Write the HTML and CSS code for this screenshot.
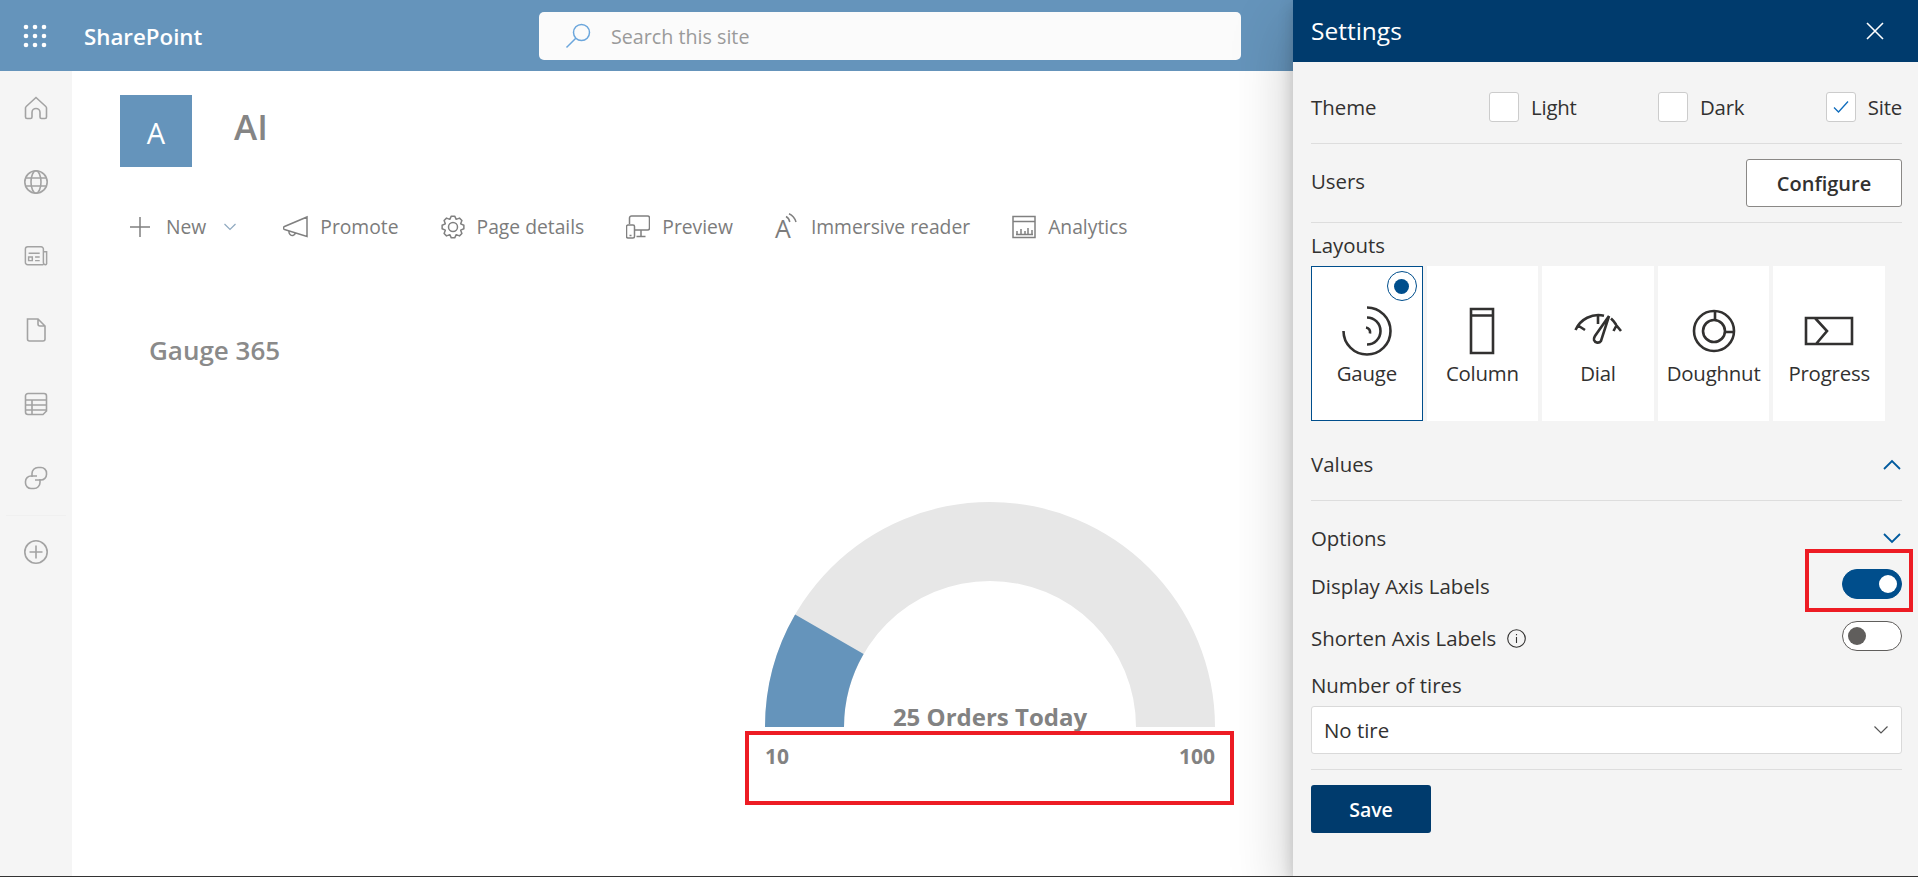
FILE: index.html
```html
<!doctype html>
<html lang="en">
<head>
	<meta charset="UTF-8">
	<title>SharePoint - AI</title>
	<link rel="stylesheet" href="styles.css">
</head>
<body>
<div class="page">
	<header class="topbar">
		<svg class="waffle" width="24" height="24" viewBox="0 0 24 24" fill="#fff">
			<circle cx="3" cy="3" r="2.3"/><circle cx="12" cy="3" r="2.3"/><circle cx="21" cy="3" r="2.3"/>
			<circle cx="3" cy="12" r="2.3"/><circle cx="12" cy="12" r="2.3"/><circle cx="21" cy="12" r="2.3"/>
			<circle cx="3" cy="21" r="2.3"/><circle cx="12" cy="21" r="2.3"/><circle cx="21" cy="21" r="2.3"/>
		</svg>
		<div class="brand">SharePoint</div>
		<div class="search">
			<svg width="26" height="26" viewBox="0 0 26 26" fill="none" stroke="#6ba6dc" stroke-width="1.5">
				<circle cx="16.5" cy="9.5" r="8"/><path d="M10.8 15.2 1.5 24.5"/>
			</svg>
			<span>Search this site</span>
		</div>
	</header>

	<div class="body-row">
		<nav class="rail">
			<a class="rail-item"><svg viewBox="0 0 24 24"><path d="M12 1.500 2.200 10.500a2 2 0 0 0-.7 1.500v9a1.500 1.500 0 0 0 1.500 1.500h3.500a1.500 1.500 0 0 0 1.500-1.500v-4.500a4 4 0 0 1 8 0V21a1.500 1.500 0 0 0 1.500 1.500H21a1.500 1.500 0 0 0 1.500-1.500v-9a2 2 0 0 0-.7-1.500z"/></svg></a>
			<a class="rail-item"><svg viewBox="0 0 24 24"><circle cx="12" cy="12" r="11.200"/><ellipse cx="12" cy="12" rx="5" ry="11.200"/><path d="M1.800 8h20.400M1.800 16h20.400"/></svg></a>
			<a class="rail-item"><svg viewBox="0 0 26 24"><path d="M21 21.500H4A2.500 2.500 0 0 1 1.500 19V4.500A2.500 2.500 0 0 1 4 2h14.500a2.500 2.500 0 0 1 2.500 2.500V19a2.500 2.500 0 0 0 2.500 2.500 1.500 1.500 0 0 0 1-1.500V7.500h-4"/><path d="M5 9h12M5 13h4v4H5zM12 13h5M12 17h5"/></svg></a>
			<a class="rail-item"><svg viewBox="0 0 24 24"><path d="M3.500 1h10.500l7 7v13a2 2 0 0 1-2 2H5.500a2 2 0 0 1-2-2zM14 1v5a2 2 0 0 0 2 2h5"/></svg></a>
			<a class="rail-item"><svg viewBox="0 0 24 24"><path d="M4 1.500h16a2.500 2.500 0 0 1 2.500 2.500v15l-3.500 3.500H4A2.500 2.500 0 0 1 1.500 20V4A2.500 2.500 0 0 1 4 1.500zM1.500 8h21M1.500 13h21M1.500 18h21M8 8v14.500"/></svg></a>
			<a class="rail-item"><svg viewBox="0 0 24 24"><path d="M8 11V7.500a6 6 0 0 1 6-6h3A5.500 5.500 0 0 1 22.500 7v1.500A5.500 5.500 0 0 1 17 14h-6"/><path d="M16 13v3.500a6 6 0 0 1-6 6H7A5.500 5.500 0 0 1 1.500 17v-1.500A5.500 5.500 0 0 1 7 10h6"/></svg></a>
			<a class="rail-item rail-add"><svg viewBox="0 0 24 24"><circle cx="12" cy="12" r="11.200"/><path d="M12 5.500v13M5.500 12h13"/></svg></a>
		</nav>

		<main class="content">
			<div class="site-head">
				<div class="site-logo">A</div>
				<h1 class="site-title">AI</h1>
			</div>

			<div class="commands">
				<div class="cmd cmd-new">
					<svg width="20" height="20" viewBox="0 0 20 20"><path d="M10 0v20M0 10h20"/></svg>
					<span class="new-label">New</span>
					<svg class="cmd-caret" width="12" height="8" viewBox="0 0 12 8"><path d="m.5 1 5.500 5.500L11.500 1"/></svg>
				</div>
				<div class="cmd">
					<svg width="25" height="24" viewBox="0 0 25 24"><path d="M24 2v19.500L1.500 14.500a1.500 1.500 0 0 1-.7-2.500c.3-.3.5-.4.7-.5zM6 16c-.5 3 2 4.800 4 4.500 1.300-.2 2-1 2.300-2.500"/></svg>
					<span>Promote</span>
				</div>
				<div class="cmd">
					<svg width="24" height="24" viewBox="0 0 24 24"><path stroke-linejoin="round" d="M22.870 13.720 19.670 15.180 20.900 18.470 18.470 20.900 15.180 19.670 13.720 22.870H10.280L8.820 19.670 5.530 20.900 3.100 18.470 4.330 15.180 1.130 13.720V10.280L4.330 8.820 3.100 5.530 5.530 3.100 8.820 4.330 10.280 1.130H13.720L15.180 4.330 18.470 3.100 20.900 5.530 19.670 8.820 22.870 10.280Z"/><circle cx="12" cy="12" r="4.500"/></svg>
					<span>Page details</span>
				</div>
				<div class="cmd">
					<svg width="24" height="24" viewBox="0 0 24 24"><path d="M3.500 9V3a2 2 0 0 1 2-2h16a2 2 0 0 1 2 2v10a2 2 0 0 1-2 2H9M15 15v6.500M10.500 21.500h9M2 10h5a1.500 1.500 0 0 1 1.500 1.500v10A1.500 1.500 0 0 1 7 23H2a1.500 1.500 0 0 1-1.500-1.500v-10A1.500 1.500 0 0 1 2 10zM3.500 20.500h2"/></svg>
					<span>Preview</span>
				</div>
				<div class="cmd">
					<span class="reader"><span class="reader-a">A</span><svg width="12" height="12" viewBox="0 0 12 12"><path d="M1 3.500c2 1 3.300 3 3.800 5.500M4 .7c3.500 1.500 6 4.800 7 8.300"/></svg></span>
					<span>Immersive reader</span>
				</div>
				<div class="cmd">
					<svg width="24" height="24" viewBox="0 0 24 24"><path d="M1 1.500h22v21H1zM1 6.500h22M5 19v-3M9 19v-5M13 19v-3M16 19v-6M20 19v-4M4 19.500h17"/></svg>
					<span>Analytics</span>
				</div>
			</div>

			<h2 class="part-title">Gauge 365</h2>

			<div class="chart">
				<svg class="gauge" width="450" height="225" viewBox="0 0 450 225">
					<path fill="#e7e7e7" d="M0 225a225 225 0 0 1 450 0H371a146 146 0 0 0-292 0z"/>
					<path fill="#6594bb" d="M0 225A225 225 0 0 1 30.100 112.500L98.600 152A146 146 0 0 0 79 225z"/>
				</svg>
				<div class="gauge-caption">25 Orders Today</div>
				<div class="axis"><span>10</span><span>100</span></div>
				<div class="mark mark-axis"></div>
			</div>
		</main>
	</div>

	<aside class="panel">
		<div class="panel-head">
			<span>Settings</span>
			<svg width="18" height="18" viewBox="0 0 18 18"><path d="m1 1 16 16M17 1 1 17"/></svg>
		</div>
		<div class="panel-body">
			<div class="row row-theme">
				<div class="row-label">Theme</div>
				<div class="theme-options">
					<label class="check"><i class="box"></i>Light</label>
					<label class="check"><i class="box"></i>Dark</label>
					<label class="check"><i class="box"><svg width="16" height="14" viewBox="0 0 16 14"><path d="m1 7.500 4.500 4.500L15 1.500"/></svg></i>Site</label>
				</div>
			</div>
			<div class="row row-users">
				<div class="users-label">Users</div>
				<button class="btn-configure">Configure</button>
			</div>
			<div class="layouts-label">Layouts</div>
			<div class="tiles">
				<div class="tile tile-on">
					<span class="radio"></span>
					<svg width="50" height="50" viewBox="0 0 50 50"><path d="M25 1.500a23.500 23.500 0 1 1-23.500 23.500M25 11.500a13.500 13.500 0 0 1 0 27M24 21.500c3 .5 4.500 3 4 6"/></svg>
					<div>Gauge</div>
				</div>
				<div class="tile">
					<svg width="50" height="50" viewBox="0 0 50 50"><path d="M14 3h22v44H14zM14 9.500h22"/></svg>
					<div>Column</div>
				</div>
				<div class="tile">
					<svg width="50" height="50" viewBox="0 0 50 50"><path d="M2.500 24A25 25 0 0 1 31 9.700M38 12.500A25 25 0 0 1 43 18.500M25 9v9M5 19.500l7 4.500M40.500 25l3-5.500 4.500 5.500M36 10 28 35a4 4 0 0 1-7-1c-.5-1.500 0-2 1-4z"/></svg>
					<div>Dial</div>
				</div>
				<div class="tile">
					<svg width="50" height="50" viewBox="0 0 50 50"><circle cx="25" cy="25" r="20"/><circle cx="25" cy="25" r="11"/><path d="M26 5v9M36 26h9"/></svg>
					<div>Doughnut</div>
				</div>
				<div class="tile">
					<svg width="50" height="50" viewBox="0 0 50 50"><path d="M2 12h46v26H2zM11 12l12 13-11 13"/></svg>
					<div>Progress</div>
				</div>
			</div>
			<div class="row-values">
				<span>Values</span>
				<svg class="chev" width="18" height="11" viewBox="0 0 18 11"><path d="m1 10 8-8 8 8"/></svg>
			</div>
			<div class="row-options">
				<span>Options</span>
				<svg class="chev" width="18" height="11" viewBox="0 0 18 11"><path d="m1 1 8 8 8-8"/></svg>
			</div>
			<div class="row-toggle row-display">
				<span class="toggle-label">Display Axis Labels</span>
				<span class="toggle toggle-on"></span>
				<div class="mark mark-toggle"></div>
			</div>
			<div class="row-toggle row-shorten">
				<span class="toggle-label shorten-label">Shorten Axis Labels
					<svg width="19" height="19" viewBox="0 0 19 19"><circle cx="9.500" cy="9.500" r="8.800"/><path d="M9.500 8v6M9.500 5v1.300"/></svg>
				</span>
				<span class="toggle"></span>
			</div>
			<div class="tires-label">Number of tires</div>
			<div class="select">
				<span>No tire</span>
				<svg width="14" height="8" viewBox="0 0 14 8"><path d="m.5.500 6.500 6.500L13.500.5"/></svg>
			</div>
			<div class="panel-foot">
				<button class="btn-save">Save</button>
			</div>
		</div>
	</aside>
</div>
</body>
</html>
```

FILE: styles.css
```css
* {
	margin: 0;
	padding: 0;
	box-sizing: border-box;
}
html, body {
	height: 877px;
	overflow: hidden;
}
body {
	font-family: "Open Sans", "Noto Sans", sans-serif;
	background: #fff;
	color: #333;
}
.page {
	position: relative;
	height: 877px;
	border-bottom: 1px solid #333;
	overflow: hidden;
}

/* top bar */
.topbar {
	height: 71px;
	background: #6594bb;
	display: flex;
	align-items: center;
	padding-left: 23px;
}
.waffle {
	flex: none;
}
.brand {
	margin-left: 37px;
	width: 118px;
	color: #fff;
	font-size: 22.3px;
	font-weight: 600;
	white-space: nowrap;
	padding-top: 1px;
}
.search {
	margin-left: 337px;
	width: 702px;
	height: 48px;
	background: #fbfbfb;
	border-radius: 5px;
	display: flex;
	align-items: center;
	padding-left: 26px;
	color: #9a9a9a;
	font-size: 19.7px;
}
.search span {
	margin-left: 20px;
	padding-top: 2px;
}

/* left rail */
.body-row {
	display: flex;
	height: 805px;
}
.rail {
	width: 72px;
	flex: none;
	background: #f5f5f5;
}
.rail-item {
	height: 74px;
	display: flex;
	align-items: center;
	justify-content: center;
}
.rail-item svg {
	width: 24px;
	height: 24px;
	fill: none;
	stroke: #a3a3a3;
	stroke-width: 1.6;
}
.rail-add {
	position: relative;
}
.rail-add:before {
	content: "";
	position: absolute;
	top: 0;
	left: 6px;
	right: 6px;
	border-top: 1px solid #f0f0f0;
}

/* page content */
.content {
	flex: 1;
	min-width: 0;
	padding-top: 24px;
}
.site-head {
	display: flex;
	padding-left: 48px;
}
.site-logo {
	width: 72px;
	height: 72px;
	background: #6594bb;
	color: #fff;
	font-size: 29px;
	display: flex;
	align-items: center;
	justify-content: center;
	padding-top: 3px;
}
.site-title {
	margin-left: 42px;
	margin-top: 8px;
	font-size: 35px;
	line-height: 48px;
	font-weight: 600;
	color: #858585;
}
.commands {
	display: flex;
	align-items: center;
	height: 40px;
	margin-top: 40px;
	margin-left: 58px;
	gap: 42px;
	color: #7c7c7c;
	font-size: 19.3px;
}
.cmd {
	display: flex;
	align-items: center;
	gap: 12px;
	white-space: nowrap;
}
.cmd > span {
	margin-top: -2px;
}
.cmd svg {
	fill: none;
	stroke: #808080;
	stroke-width: 1.5;
	flex: none;
}
.cmd-new {
	gap: 0;
	margin-right: 5px;
}
.new-label {
	margin-left: 16px;
}
.cmd svg.cmd-caret {
	stroke: #8fa9c0;
	stroke-width: 1.2;
	margin-left: 18px;
}
.reader {
	display: flex;
	width: 24px;
	height: 26px;
	align-items: flex-start;
}
.reader-a {
	font-size: 25px;
	line-height: 30px;
}
.cmd .reader svg {
	margin-left: -6px;
}
.part-title {
	margin: 87px 0 0 77px;
	font-size: 26px;
	line-height: 32px;
	font-weight: 600;
	color: #8a8a8a;
}

/* gauge */
.chart {
	position: relative;
	width: 450px;
	margin: 136px 0 0 693px;
}
.gauge {
	display: block;
}
.gauge-caption {
	position: absolute;
	top: 200px;
	left: 0;
	right: 0;
	text-align: center;
	font-size: 24px;
	line-height: 30px;
	font-weight: 700;
	color: #828282;
}
.axis {
	display: flex;
	justify-content: space-between;
	margin-top: 17px;
	font-size: 21px;
	line-height: 24px;
	font-weight: 700;
	color: #828282;
}

/* red marks */
.mark {
	position: absolute;
	border: 4.5px solid #ed1c24;
}
.mark-axis {
	left: -20px;
	top: 229px;
	width: 489px;
	height: 74px;
}
.mark-toggle {
	right: -11px;
	top: -20px;
	width: 108px;
	height: 63px;
}

/* settings panel */
.panel {
	position: absolute;
	top: 0;
	right: 0;
	bottom: 0;
	width: 625px;
	background: #f4f4f4;
	box-shadow: 0 25px 58px rgba(0, 0, 0, .22), 0 5px 14px rgba(0, 0, 0, .18);
	font-size: 20.4px;
	color: #323130;
}
.panel-head {
	height: 62px;
	background: #003b6d;
	color: #fff;
	display: flex;
	align-items: center;
	justify-content: space-between;
	padding: 0 34px 2px 18px;
	font-size: 24.5px;
}
.panel-head svg {
	fill: none;
	stroke: #fff;
	stroke-width: 1.6;
	margin-top: 2px;
}
.panel-body {
	padding: 0 16px 0 18px;
}
.row {
	display: flex;
	border-bottom: 1px solid #ddd;
}
.row-theme {
	height: 82px;
	padding-top: 30px;
}
.row-label {
	width: 178px;
	line-height: 30px;
	font-weight: 500;
}
.theme-options {
	flex: 1;
	display: flex;
	justify-content: space-between;
	letter-spacing: -.2px;
}
.check {
	display: flex;
	align-items: center;
	height: 30px;
	gap: 12px;
}
.box {
	width: 30px;
	height: 30px;
	background: #fff;
	border: 1px solid #ccc;
	border-radius: 3px;
	display: flex;
	align-items: center;
	justify-content: center;
}
.box svg {
	fill: none;
	stroke: #0f6cbd;
	stroke-width: 1.3;
}
.row-users {
	height: 79px;
	align-items: center;
	justify-content: space-between;
}
.users-label {
	font-weight: 500;
	margin-bottom: 4px;
}
.btn-configure {
	width: 156px;
	height: 48px;
	background: #fff;
	border: 1px solid #8a8886;
	border-radius: 3px;
	font: 600 20px "Open Sans", "Noto Sans", sans-serif;
	color: #323130;
}
.layouts-label {
	margin-top: 10px;
	line-height: 24px;
	font-weight: 500;
}
.tiles {
	display: grid;
	grid-template-columns: repeat(5, 1fr);
	gap: 4px;
	width: 574px;
	margin-top: 9px;
}
.tile {
	position: relative;
	height: 155px;
	background: #fff;
	padding-top: 40px;
	display: flex;
	flex-direction: column;
	align-items: center;
	white-space: nowrap;
	line-height: 24px;
	letter-spacing: -.2px;
}
.tile svg {
	fill: none;
	stroke: #323130;
	stroke-width: 2.6;
	margin-bottom: 5px;
	flex: none;
}
.tile-on {
	border: 1px solid #004e8c;
	padding-top: 39px;
}
.radio {
	position: absolute;
	top: 4px;
	right: 5px;
	width: 30px;
	height: 30px;
	border: 1px solid #004e8c;
	border-radius: 50%;
	background: #fff;
	display: flex;
	align-items: center;
	justify-content: center;
}
.radio:before {
	content: "";
	width: 15px;
	height: 15px;
	border-radius: 50%;
	background: #004e8c;
}
.row-values, .row-options {
	display: flex;
	justify-content: space-between;
	align-items: center;
	line-height: 24px;
	font-weight: 500;
}
.row-values {
	margin-top: 31px;
	padding-bottom: 24px;
	border-bottom: 1px solid #ddd;
}
.row-options {
	margin-top: 25px;
}
.chev {
	fill: none;
	stroke: #005a9e;
	stroke-width: 1.8;
	margin-right: 1px;
}
.row-toggle {
	position: relative;
	display: flex;
	justify-content: space-between;
	align-items: center;
	height: 30px;
}
.toggle-label {
	font-weight: 500;
	padding-top: 4px;
}
.row-display {
	margin-top: 19px;
}
.row-shorten {
	margin-top: 22px;
}
.shorten-label {
	display: flex;
	align-items: center;
	gap: 11px;
}
.shorten-label svg {
	fill: none;
	stroke: #323130;
	stroke-width: 1.1;
}
.toggle {
	position: relative;
	width: 60px;
	height: 30px;
	border: 1px solid #605e5c;
	border-radius: 15px;
	background: #fff;
}
.toggle:before {
	content: "";
	position: absolute;
	top: 5px;
	left: 5px;
	width: 18px;
	height: 18px;
	border-radius: 50%;
	background: #605e5c;
}
.toggle-on {
	background: #004e8c;
	border-color: #004e8c;
}
.toggle-on:before {
	left: 36px;
	background: #fff;
}
.tires-label {
	margin-top: 22px;
	line-height: 24px;
	font-weight: 500;
}
.select {
	height: 48px;
	margin-top: 9px;
	background: #fff;
	border: 1px solid #d9d9d9;
	border-radius: 3px;
	display: flex;
	align-items: center;
	justify-content: space-between;
	padding: 0 13px 0 12px;
}
.select svg {
	fill: none;
	stroke: #555;
	stroke-width: 1.2;
}
.panel-foot {
	margin-top: 15px;
	padding-top: 15px;
	border-top: 1px solid #ddd;
}
.btn-save {
	width: 120px;
	height: 48px;
	background: #003b6d;
	border: 0;
	border-radius: 3px;
	color: #fff;
	font: 600 19.5px "Open Sans", "Noto Sans", sans-serif;
}
```
